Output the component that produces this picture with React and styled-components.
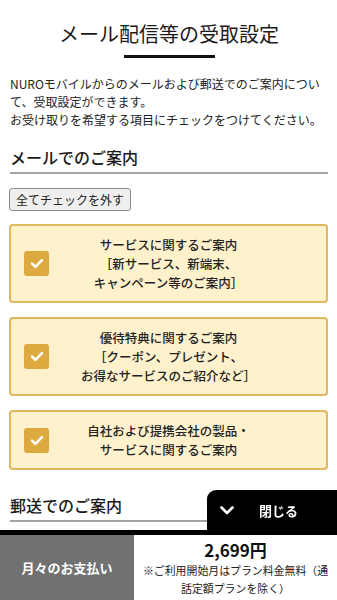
import React, { useState } from 'react';
import styled, { createGlobalStyle } from 'styled-components';

const GlobalStyle = createGlobalStyle`
  html, body { margin: 0; padding: 0; background: #fff; }
  body {
    font-family: "Noto Sans CJK JP", "Noto Sans", sans-serif;
    color: #222;
  }
`;

const Page = styled.div`
  padding: 0 9px 100px 10px;
`;

const Title = styled.h1`
  margin: 0;
  padding-top: 19px;
  font-size: 20px;
  font-weight: 400;
  line-height: 30px;
  text-align: center;
  color: #1a1a1a;
  &::after {
    content: '';
    display: block;
    width: 91px;
    height: 3px;
    background: #111;
    margin: 6px auto 0;
  }
`;

const Lead = styled.p`
  margin: 17px 0 0;
  font-size: 12px;
  line-height: 18px;
  color: #222;
`;

const SectionHead = styled.h2`
  margin: ${p => p.$top}px 0 0;
  font-size: 16px;
  font-weight: 500;
  line-height: 24px;
  padding-bottom: 3px;
  border-bottom: 2px solid #a3a3a3;
  color: #1a1a1a;
`;

const UncheckBtn = styled.button`
  margin: 14px 0 0 -1px;
  height: 23px;
  padding: 0 6px;
  font-family: inherit;
  font-size: 12px;
  color: #222;
  background: #efefef;
  border: 1px solid #8d8d8d;
  border-radius: 3px;
  display: block;
`;

const CardList = styled.div`
  display: flex;
  flex-direction: column;
  gap: 14px;
  margin: 13px 0 0 -1px;
`;

const Card = styled.label`
  display: grid;
  grid-template-columns: 25px 1fr 25px;
  align-items: center;
  padding: 9px 13px;
  background: #fef1cc;
  border: 2px solid #dfb85f;
  border-radius: 4px;
  cursor: pointer;
`;

const Box = styled.span`
  width: 25px;
  height: 25px;
  border-radius: 3px;
  background: ${p => (p.$on ? '#dcaa3e' : '#fff')};
  border: ${p => (p.$on ? 'none' : '1px solid #dcaa3e')};
  box-sizing: border-box;
  display: flex;
  align-items: center;
  justify-content: center;
`;

const CardText = styled.span`
  text-align: center;
  font-size: 12.5px;
  font-weight: 500;
  line-height: 19px;
  color: #222;
`;

const Footer = styled.div`
  position: fixed;
  left: 0;
  right: 0;
  bottom: 0;
  border-top: 5px solid #000;
  display: grid;
  grid-template-columns: 134px 1fr;
  height: 65px;
  background: #fff;
`;

const CloseTab = styled.button`
  position: absolute;
  right: 0;
  top: -45px;
  width: 130px;
  height: 40px;
  background: #000;
  border: none;
  border-top-left-radius: 9px;
  color: #fff;
  font-family: inherit;
  font-size: 13px;
  font-weight: 700;
  display: flex;
  align-items: center;
  padding: 0 0 0 13px;
  span { flex: 1; text-align: center; padding-right: 14px; }
`;

const PayLabel = styled.div`
  background: #717171;
  color: #fff;
  font-size: 13px;
  font-weight: 700;
  display: flex;
  align-items: center;
  justify-content: center;
`;

const PayInfo = styled.div`
  display: flex;
  flex-direction: column;
  align-items: center;
  text-align: center;
  padding-top: 4px;
`;

const Price = styled.div`
  font-size: 17px;
  font-weight: 700;
  line-height: 22px;
  color: #111;
`;

const Note = styled.div`
  font-size: 10.9px;
  line-height: 18px;
  color: #222;
  padding: 0 6px;
`;

const Check = () => (
  <svg width="14" height="11" viewBox="0 0 14 11">
    <path d="M2 5.6 L5.4 8.8 L12 2.2" fill="none" stroke="#fff" strokeWidth="2.6" strokeLinecap="round" strokeLinejoin="round" />
  </svg>
);

const Chevron = () => (
  <svg width="14" height="9" viewBox="0 0 14 9">
    <path d="M1.5 1.5 L7 7 L12.5 1.5" fill="none" stroke="#fff" strokeWidth="2.6" strokeLinecap="round" strokeLinejoin="round" />
  </svg>
);

const items = [
  ['サービスに関するご案内', '［新サービス、新端末、', 'キャンペーン等のご案内］'],
  ['優待特典に関するご案内', '［クーポン、プレゼント、', 'お得なサービスのご紹介など］'],
  ['自社および提携会社の製品・', 'サービスに関するご案内'],
];

export default function App() {
  const [checked, setChecked] = useState([true, true, true]);

  return (
    <>
      <GlobalStyle />
      <Page>
        <Title>メール配信等の受取設定</Title>
        <Lead>
          NUROモバイルからのメールおよび郵送でのご案内について、受取設定ができます。
          <br />
          お受け取りを希望する項目にチェックをつけてください。
        </Lead>

        <SectionHead $top={16}>メールでのご案内</SectionHead>
        <UncheckBtn onClick={() => setChecked([false, false, false])}>全てチェックを外す</UncheckBtn>

        <CardList>
          {items.map((lines, i) => (
            <Card key={i} onClick={() => setChecked(c => c.map((v, j) => (j === i ? !v : v)))}>
              <Box $on={checked[i]}>{checked[i] && <Check />}</Box>
              <CardText>
                {lines.map((l, k) => (
                  <React.Fragment key={k}>
                    {k > 0 && <br />}
                    {l}
                  </React.Fragment>
                ))}
              </CardText>
            </Card>
          ))}
        </CardList>

        <SectionHead $top={23}>郵送でのご案内</SectionHead>
      </Page>

      <Footer>
        <CloseTab>
          <Chevron />
          <span>閉じる</span>
        </CloseTab>
        <PayLabel>月々のお支払い</PayLabel>
        <PayInfo>
          <Price>2,699円</Price>
          <Note>※ご利用開始月はプラン料金無料（通話定額プランを除く）</Note>
        </PayInfo>
      </Footer>
    </>
  );
}
